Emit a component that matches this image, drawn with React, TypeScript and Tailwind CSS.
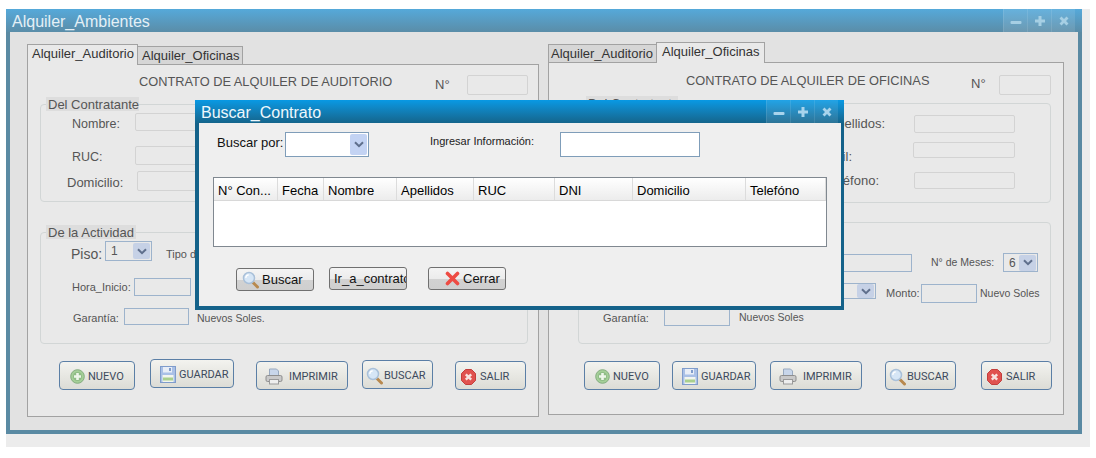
import type { ReactNode } from "react"

const WinControls = ({ tone }: { tone: string }) => (
  <div className="flex h-full">
    {["min", "max", "close"].map((kind) => (
      <div key={kind} className="flex h-[23px] w-[24px] items-center justify-center border-l border-white/10 bg-white/10">
        <svg width="14" height="14" viewBox="0 0 14 14">
          {kind === "min" && <rect x="1.5" y="7" width="11" height="3" rx="1" fill={tone} />}
          {kind === "max" && <path d="M5.5 2h3v3.5H12v3H8.500V12h-3V8.500H2v-3h3.500z" fill={tone} />}
          {kind === "close" && <path d="M2.500 4.500l2-2L7 5l2.500-2.500 2 2L9 7l2.500 2.500-2 2L7 9l-2.500 2.500-2-2L5 7z" fill={tone} />}
        </svg>
      </div>
    ))}
  </div>
)

const ChevronBox = ({ className }: { className: string }) => (
  <div className={`flex items-center justify-center rounded-[2px] ${className}`}>
    <svg width="10" height="7" viewBox="0 0 10 7">
      <path d="M1 1.200l4 4 4-4" fill="none" stroke="#5f6f8c" strokeWidth="2" />
    </svg>
  </div>
)

const SearchIcon = () => (
  <svg width="18" height="18" viewBox="0 0 18 18" className="shrink-0">
    <path d="M10.500 11l5 5" stroke="#b8894e" strokeWidth="3" strokeLinecap="round" />
    <circle cx="7" cy="7" r="5.500" fill="#d6e6f6" stroke="#a9c0d9" strokeWidth="1.500" />
    <path d="M3.800 7a3.200 3.200 0 0 1 3-3.200" fill="none" stroke="#fff" strokeWidth="1.200" />
  </svg>
)

const PlusIcon = () => (
  <svg width="15" height="15" viewBox="0 0 15 15" className="shrink-0">
    <circle cx="7.500" cy="7.500" r="6.800" fill="#a5cf98" stroke="#84ad7f" />
    <circle cx="7.500" cy="7.500" r="4.500" fill="#8fbc86" />
    <path d="M6.200 4h2.600v2.200H11v2.600H8.800V11H6.200V8.800H4V6.200h2.200z" fill="#eef6ea" />
  </svg>
)

const FloppyIcon = () => (
  <svg width="16" height="17" viewBox="0 0 16 17" className="shrink-0">
    <rect x="0.500" y="0.500" width="15" height="16" fill="#a9c0e6" stroke="#7f9ccb" />
    <rect x="3" y="1" width="9" height="5.500" fill="#e8eef7" />
    <rect x="9" y="2" width="2" height="3" fill="#7f9ccb" />
    <rect x="2.500" y="9" width="11" height="7" fill="#f2f5ef" />
    <rect x="3" y="11.500" width="10" height="3" fill="#a9d08e" />
  </svg>
)

const PrinterIcon = () => (
  <svg width="18" height="17" viewBox="0 0 18 17" className="shrink-0">
    <path d="M4.500 8V1h7l2 2v5z" fill="#c8d6ea" stroke="#98a9bf" />
    <rect x="1" y="7.500" width="16" height="6" rx="1.500" fill="#c9c9c9" stroke="#8e8e8e" />
    <rect x="4.500" y="11.500" width="9" height="4.500" fill="#eeeeee" stroke="#9a9a9a" />
  </svg>
)

const StopIcon = () => (
  <svg width="15" height="16" viewBox="0 0 15 16" className="shrink-0">
    <path d="M4.500.500h6l4 4v7l-4 4h-6l-4-4v-7z" fill="#e0524f" stroke="#c33e3c" />
    <path d="M4.800 5.300l5.400 5.400M10.200 5.300l-5.400 5.400" stroke="#f7e3e0" strokeWidth="2.400" />
  </svg>
)

const CrossIcon = () => (
  <svg width="15" height="15" viewBox="0 0 15 15" className="shrink-0">
    <path d="M2.500 2.500l10 10M12.500 2.500l-10 10" stroke="#ee4b43" strokeWidth="3.600" strokeLinecap="round" />
  </svg>
)

const ActionButton = ({ icon, label, className }: { icon: ReactNode; label: string; className: string }) => (
  <button className={`flex h-[29px] shrink-0 items-center rounded-[4px] border border-[#5b7fa6] bg-gradient-to-b from-[#f3f3ef] to-[#dcdcd6] pt-[2px] font-['Roboto',sans-serif] text-[11px] text-[#3d4a5c] ${className}`}>
    {icon}
    <span className="pt-[2px]">{label}</span>
  </button>
)

const DialogButton = ({ children, className }: { children: ReactNode; className: string }) => (
  <button className={`flex h-[23px] w-[78px] shrink-0 items-center overflow-hidden whitespace-nowrap rounded-[3px] border border-[#707070] bg-[linear-gradient(#f4f4f4_0%,#ececec_50%,#d2d2d2_52%,#cfcfcf_100%)] text-[13px] text-[#111] ${className}`}>
    {children}
  </button>
)

const Legend = ({ label, className }: { label: string; className: string }) => (
  <div className={`h-[14px] whitespace-nowrap bg-[#dddddd] pl-[2px] text-[13px] leading-[15px] text-[#555] ${className}`}>{label}</div>
)

const columns = [
  { label: "N° Con...", width: "w-[64px]" },
  { label: "Fecha", width: "w-[46px]" },
  { label: "Nombre", width: "w-[73px]" },
  { label: "Apellidos", width: "w-[77px]" },
  { label: "RUC", width: "w-[81px]" },
  { label: "DNI", width: "w-[78px]" },
  { label: "Domicilio", width: "w-[113px]" },
  { label: "Telefóno", width: "w-[80px]" },
]

const off = "rounded-[2px] border border-[#d3d3d3] bg-[#e9e9e9]"
const on = "border border-[#9db3cc] bg-[#e9e9e9]"

const AuditorioPanel = () => (
  <div className="mt-[11px] flex w-[512px] shrink-0 flex-col">
    <div className="flex h-[21px] items-end">
      <div className="relative z-10 -mb-px h-[21px] w-[111px] border border-b-0 border-[#a2a2a2] bg-[#e9e9e9] pl-[4px] text-[13px] leading-[18px] text-[#333]">Alquiler_Auditorio</div>
      <div className="h-[18px] w-[105px] border border-b-0 border-l-0 border-[#a2a2a2] bg-[#d6d6d6] pl-[4px] text-[13px] leading-[17px] text-[#333]">Alquiler_Oficinas</div>
    </div>
    <div className="h-[353px] border border-[#a2a2a2] bg-[#e9e9e9]">
      <div className="flex h-[39px] items-start">
        <span className="ml-[111px] mt-[9px] w-[296px] text-[12.8px] leading-[16px] text-[#555]">CONTRATO DE ALQUILER DE AUDITORIO</span>
        <span className="mt-[12px] w-[32px] text-[13px] leading-[16px] text-[#555]">N°</span>
        <div className={`mt-[10px] h-[20px] w-[61px] ${off}`} />
      </div>

      <div className="ml-[12px] h-[98px] w-[488px] rounded-[4px] border border-[#d2d6d6]">
        <Legend label="Del Contratante" className="-mt-[8px] ml-[5px] w-[93px]" />
        <div className="mt-[2px] flex h-[18px] items-center text-[12.5px] text-[#555]">
          <span className="ml-[31px] mt-[4px] w-[63px]">Nombre:</span>
          <div className={`h-full w-[120px] ${off}`} />
        </div>
        <div className="mt-[15px] flex h-[19px] items-center text-[12.5px] text-[#555]">
          <span className="ml-[31px] mt-[4px] w-[63px]">RUC:</span>
          <div className={`h-full w-[120px] ${off}`} />
        </div>
        <div className="mt-[6px] flex h-[20px] items-center text-[13px] text-[#555]">
          <span className="ml-[26px] mt-[4px] w-[70px]">Domicilio:</span>
          <div className={`h-full w-[120px] ${off}`} />
        </div>
      </div>

      <div className="ml-[12px] mt-[30px] h-[112px] w-[488px] rounded-[4px] border border-[#d2d6d6]">
        <Legend label="De la Actividad" className="-mt-[8px] ml-[5px] w-[90px]" />
        <div className="mt-[2px] flex h-[20px] items-center text-[#555]">
          <span className="ml-[30px] mt-[6px] w-[34px] text-[14px]">Piso:</span>
          <div className={`flex h-full w-[47px] items-center justify-between pl-[5px] pr-[1px] text-[12px] ${on}`}>
            <span>1</span>
            <ChevronBox className="h-[16px] w-[17px] bg-[#c6d1e6]" />
          </div>
          <span className="ml-[14px] mt-[6px] text-[11px]">Tipo de Evento:</span>
        </div>
        <div className="mt-[17px] flex h-[18px] items-center text-[11px] text-[#555]">
          <span className="ml-[31px] w-[62px]">Hora_Inicio:</span>
          <div className={`h-full w-[57px] ${on}`} />
        </div>
        <div className="mt-[12px] flex h-[17px] items-center text-[11px] text-[#555]">
          <span className="ml-[32px] mt-[3px] w-[51px]">Garantía:</span>
          <div className={`h-full w-[65px] ${on}`} />
          <span className="ml-[8px] mt-[4px] text-[10.5px]">Nuevos Soles.</span>
        </div>
      </div>

      <div className="mt-[15px] flex items-start">
        <ActionButton icon={<PlusIcon />} label="NUEVO" className="ml-[31px] mt-[2px] w-[76px] gap-[3px] pl-[10px]" />
        <ActionButton icon={<FloppyIcon />} label="GUARDAR" className="ml-[15px] w-[84px] gap-[3px] pl-[9px]" />
        <ActionButton icon={<PrinterIcon />} label="IMPRIMIR" className="ml-[22px] mt-[2px] w-[92px] gap-[6px] pl-[8px]" />
        <ActionButton icon={<SearchIcon />} label="BUSCAR" className="ml-[14px] mt-[1px] w-[71px] gap-0 pl-[3px]" />
        <ActionButton icon={<StopIcon />} label="SALIR" className="ml-[22px] mt-[2px] w-[71px] gap-[4px] pl-[5px]" />
      </div>
    </div>
  </div>
)

const OficinasPanel = () => (
  <div className="ml-[9px] mt-[9px] flex w-[516px] shrink-0 flex-col">
    <div className="flex h-[21px] items-end">
      <div className="h-[18px] w-[108px] border border-b-0 border-r-0 border-[#a2a2a2] bg-[#d6d6d6] pl-[2px] text-[13px] leading-[17px] text-[#333]">Alquiler_Auditorio</div>
      <div className="relative z-10 -mb-px h-[21px] w-[109px] border border-b-0 border-[#a2a2a2] bg-[#e9e9e9] pl-[5px] text-[13px] leading-[18px] text-[#333]">Alquiler_Oficinas</div>
    </div>
    <div className="h-[353px] border border-[#a2a2a2] bg-[#e9e9e9]">
      <div className="flex h-[40px] items-start">
        <span className="ml-[137px] mt-[10px] w-[285px] text-[12.8px] leading-[16px] text-[#555]">CONTRATO DE ALQUILER DE OFICINAS</span>
        <span className="mt-[13px] w-[28px] text-[13px] leading-[16px] text-[#555]">N°</span>
        <div className={`mt-[12px] h-[20px] w-[52px] ${off}`} />
      </div>

      <div className="ml-[29px] h-[100px] w-[473px] rounded-[4px] border border-[#d2d6d6]">
        <Legend label="Del Contratante" className="-mt-[8px] ml-[7px] w-[92px]" />
        <div className="mt-[5px] flex h-[18px] items-center text-[13px] text-[#555]">
          <span className="w-[306px] text-right">Apellidos:</span>
          <div className={`ml-[29px] h-full w-[101px] ${off}`} />
        </div>
        <div className="mt-[9px] flex h-[16px] items-center text-[13px] text-[#555]">
          <span className="mt-[14px] w-[273px] text-right">Email:</span>
          <div className={`ml-[61px] h-full w-[102px] ${off}`} />
        </div>
        <div className="mt-[14px] flex h-[17px] items-center text-[13px] text-[#555]">
          <span className="w-[300px] text-right">Teléfono:</span>
          <div className={`ml-[35px] h-full w-[101px] ${off}`} />
        </div>
      </div>

      <div className="ml-[29px] mt-[19px] h-[122px] w-[473px] rounded-[4px] border border-[#d2d6d6]">
        <div className="mt-[30px] flex h-[19px] items-center text-[10.5px] text-[#555]">
          <div className={`ml-[200px] h-[18px] w-[133px] ${on}`} />
          <span className="ml-[19px] w-[72px]">N° de Meses:</span>
          <div className={`flex h-full w-[35px] items-center justify-between pl-[5px] pr-[1px] text-[12px] ${on}`}>
            <span>6</span>
            <ChevronBox className="h-[16px] w-[17px] bg-[#c6d1e6]" />
          </div>
        </div>
        <div className="mt-[11px] flex h-[20px] items-start text-[#555]">
          <div className={`ml-[200px] flex h-[16px] w-[97px] items-center justify-end pr-[1px] ${on}`}>
            <ChevronBox className="h-[14px] w-[17px] bg-[#c6d1e6]" />
          </div>
          <span className="ml-[10px] mt-[2px] w-[35px] text-[11px]">Monto:</span>
          <div className={`mt-[1px] h-[19px] w-[56px] ${on}`} />
          <span className="ml-[3px] mt-[3px] text-[10.5px]">Nuevo Soles</span>
        </div>
        <div className="mt-[5px] flex h-[18px] items-center text-[#555]">
          <span className="ml-[24px] mt-[2px] w-[61px] text-[11px]">Garantía:</span>
          <div className={`h-full w-[66px] ${on}`} />
          <span className="ml-[9px] mt-[2px] text-[10.5px]">Nuevos Soles</span>
        </div>
      </div>

      <div className="mt-[17px] flex items-start">
        <ActionButton icon={<PlusIcon />} label="NUEVO" className="ml-[35px] w-[76px] gap-[3px] pl-[10px]" />
        <ActionButton icon={<FloppyIcon />} label="GUARDAR" className="ml-[12px] w-[84px] gap-[3px] pl-[9px]" />
        <ActionButton icon={<PrinterIcon />} label="IMPRIMIR" className="ml-[14px] w-[92px] gap-[6px] pl-[8px]" />
        <ActionButton icon={<SearchIcon />} label="BUSCAR" className="ml-[23px] w-[71px] gap-0 pl-[3px]" />
        <ActionButton icon={<StopIcon />} label="SALIR" className="ml-[25px] w-[71px] gap-[4px] pl-[5px]" />
      </div>
    </div>
  </div>
)

const BuscarDialog = () => (
  <div className="absolute left-[195px] top-[100px] z-20 flex h-[210px] w-[649px] flex-col">
    <div className="flex h-[23px] shrink-0 items-center justify-between bg-gradient-to-b from-[#0899e4] to-[#14658c] pl-[6px] pr-[6px]">
      <span className="pt-[2px] text-[16px] text-[#eef8fd]">Buscar_Contrato</span>
      <WinControls tone="#a8d4ec" />
    </div>
    <div className="flex-1 border-x-[4px] border-b-[4px] border-r-[3px] border-[#14628a] bg-[#efefef]">
      <div className="mt-[9px] flex h-[25px] items-start">
        <span className="ml-[18px] mt-[2px] w-[68px] text-[13px] leading-[18px] text-[#111]">Buscar por:</span>
        <div className="flex h-full w-[84px] items-center justify-end border border-[#7f9db9] bg-white pr-[1px]">
          <ChevronBox className="h-[21px] w-[17px] bg-[#c3d3f3]" />
        </div>
        <span className="ml-[61px] mt-[2px] w-[130px] text-[11px] leading-[14px] text-[#222]">Ingresar Información:</span>
        <div className="h-full w-[140px] border border-[#7f9db9] bg-white" />
      </div>

      <div className="ml-[14px] mt-[20px] h-[70px] w-[614px] border border-[#808890] bg-white">
        <div className="flex h-[23px] border-b border-[#d8d8d8] bg-gradient-to-b from-white to-[#ececec]">
          {columns.map((col) => (
            <div key={col.label} className={`${col.width} border-r border-[#dcdcdc] pl-[4px] text-[13px] leading-[26px] text-black`}>
              {col.label}
            </div>
          ))}
        </div>
      </div>

      <div className="mt-[20px] flex items-start">
        <DialogButton className="ml-[37px] mt-[1px] gap-[2px] pl-[5px]">
          <SearchIcon />
          Buscar
        </DialogButton>
        <DialogButton className="ml-[15px] pl-[4px]">Ir_a_contrato</DialogButton>
        <DialogButton className="ml-[21px] gap-[3px] pl-[16px]">
          <CrossIcon />
          Cerrar
        </DialogButton>
      </div>
    </div>
  </div>
)

export default function App() {
  return (
    <div className="relative h-[458px] w-[1096px] overflow-hidden bg-white font-['Liberation_Sans',sans-serif]">
      <div className="ml-[6px] mt-[9px] h-[438px] w-[1084px] bg-[#ececec]">
        <div className="flex h-[425px] w-[1076px] flex-col">
          {/* Main window */}
          <div className="flex h-[23px] shrink-0 items-center justify-between bg-gradient-to-b from-[#55a9da] to-[#5a8da8] pl-[6px] pr-[7px]">
            <span className="pt-[2px] text-[16px] text-[#e4f0f6]">Alquiler_Ambientes</span>
            <WinControls tone="#a6cfe4" />
          </div>
          <div className="flex flex-1 border-x-[4px] border-b-[4px] border-[#5a8aa3] bg-[#e2e2e2] pl-[17px]">
            <AuditorioPanel />
            <OficinasPanel />
          </div>
        </div>
      </div>
      <BuscarDialog />
    </div>
  )
}
